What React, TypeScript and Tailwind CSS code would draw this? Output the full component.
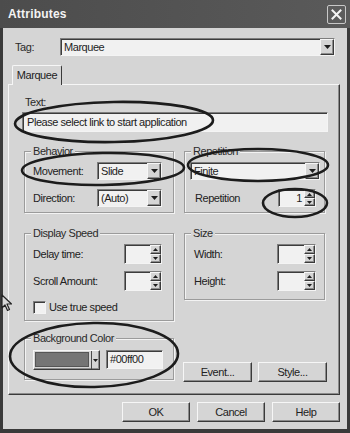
import React from "react";

const sunken =
  "border border-t-[#7d7d7d] border-l-[#7d7d7d] border-b-[#f4f4f4] border-r-[#f4f4f4] shadow-[inset_1px_1px_0_#3c3c3c] bg-[#f1f1f1]";
const raised =
  "border border-t-[#f6f6f6] border-l-[#f6f6f6] border-b-[#3a3a3a] border-r-[#3a3a3a] shadow-[inset_-1px_-1px_0_#8c8c8c] bg-[#d5d5d5]";

function Down({ w = 7, h = 4 }: { w?: number; h?: number }) {
  return (
    <svg width={w} height={h} viewBox="0 0 7 4">
      <path d="M0 0h7L3.5 4z" fill="#1e1e1e" />
    </svg>
  );
}

function Up() {
  return (
    <svg width="5" height="3" viewBox="0 0 5 3">
      <path d="M0 3h5L2.5 0z" fill="#1e1e1e" />
    </svg>
  );
}

function Combo({ value, className = "" }: { value: string; className?: string }) {
  return (
    <div className={`flex h-[18px] ${sunken} ${className}`}>
      <span className="flex-1 pl-[3px] leading-[16px] text-[#1e1e1e]">{value}</span>
      <div className={`w-[14px] h-full flex items-center justify-center ${raised}`}>
        <Down />
      </div>
    </div>
  );
}

function Spin({ value = "", className = "" }: { value?: string; className?: string }) {
  return (
    <div className={`flex ${sunken} ${className}`}>
      <span className="flex-1 text-right pr-[2px] leading-[16px] text-[#1e1e1e]">{value}</span>
      <div className="w-[11px] flex flex-col">
        <div className={`flex-1 flex items-center justify-center ${raised}`}>
          <Up />
        </div>
        <div className={`flex-1 flex items-center justify-center ${raised}`}>
          <Down w={5} h={3} />
        </div>
      </div>
    </div>
  );
}

function Group({
  label,
  className = "",
  children,
}: {
  label: string;
  className?: string;
  children?: React.ReactNode;
}) {
  return (
    <div
      className={`relative border border-[#9b9b9b] shadow-[1px_1px_0_#f3f3f3,inset_1px_1px_0_#f3f3f3] ${className}`}
    >
      <span className="absolute left-[6px] -top-[8px] px-[2px] bg-[#d5d5d5] leading-[14px] text-[#2a2a2a]">
        {label}
      </span>
      {children}
    </div>
  );
}

function Btn({ label, className = "" }: { label: string; className?: string }) {
  return (
    <div
      className={`h-[20px] flex items-center justify-center text-[#222] ${raised} ${className}`}
    >
      {label}
    </div>
  );
}

export default function App() {
  return (
    <div className="relative w-[350px] h-[433px] overflow-hidden bg-[#d5d5d5] font-['Liberation_Sans',sans-serif] text-[11px] tracking-[-0.45px] text-[#222]">
      {/* title bar */}
      <div className="h-[28px] flex items-center justify-between pl-[8px] pr-[4px] bg-gradient-to-r from-[#4c4c4c] to-[#5a5a5a]">
        <span className="font-bold text-[12px] text-[#f4f4f4] tracking-[0.2px]">Attributes</span>
        <div className="w-[19px] h-[19px] rounded-[2px] border border-[#c8c8c8] bg-[#5c5c5c] flex items-center justify-center">
          <svg width="11" height="11" viewBox="0 0 11 11">
            <path d="M1.5 1.5l8 8M9.5 1.5l-8 8" stroke="#f4f4f4" strokeWidth="2" strokeLinecap="square" />
          </svg>
        </div>
      </div>

      {/* body */}
      <div className="h-[405px] flex flex-col border-l-[3px] border-r-[3px] border-b-[4px] border-[#3a3a3a]">
        <div className="flex items-center mt-[10px] ml-[12px]">
          <span className="w-[45px] text-[#2a2a2a]">Tag:</span>
          <Combo value="Marquee" className="w-[275px]" />
        </div>

        {/* tab */}
        <div className="relative z-10 mt-[9px] ml-[9px] -mb-[1px] w-[50px] h-[20px] flex items-center justify-center bg-[#d5d5d5] border-t border-l border-r border-t-[#f6f6f6] border-l-[#f6f6f6] border-r-[#3a3a3a] rounded-t-[2px]">
          Marquee
        </div>

        {/* panel */}
        <div className="ml-[5px] w-[332px] h-[311px] flex flex-col pl-[13px] border border-t-[#f6f6f6] border-l-[#f6f6f6] border-b-[#3a3a3a] border-r-[#3a3a3a] shadow-[inset_-1px_-1px_0_#8c8c8c]">
          <span className="mt-[10px] ml-[3px] leading-[14px] text-[#2a2a2a]">Text:</span>
          <div className={`mt-[3px] w-[306px] h-[20px] flex items-center pl-[4px] ${sunken}`}>
            Please select link to start application
          </div>

          <div className="mt-[19px] ml-[2px] flex gap-[10px]">
            <Group label="Behavior" className="w-[150px] h-[62px]">
              <div className="flex flex-col gap-[9px] pt-[10px] pl-[8px]">
                <div className="flex items-center">
                  <span className="w-[64px]">Movement:</span>
                  <Combo value="Slide" className="w-[65px]" />
                </div>
                <div className="flex items-center">
                  <span className="w-[64px]">Direction:</span>
                  <Combo value="(Auto)" className="w-[65px]" />
                </div>
              </div>
            </Group>
            <Group label="Repetition" className="w-[141px] h-[62px]">
              <div className="flex flex-col gap-[9px] pt-[10px] pl-[5px]">
                <Combo value="Finite" className="w-[130px]" />
                <div className="flex items-center">
                  <span className="w-[88px] pl-[5px]">Repetition</span>
                  <Spin value="1" className="w-[38px] h-[18px]" />
                </div>
              </div>
            </Group>
          </div>

          <div className="mt-[20px] ml-[2px] flex items-start gap-[10px]">
            <Group label="Display Speed" className="w-[150px] h-[88px]">
              <div className="flex flex-col gap-[7px] pt-[10px] pl-[8px]">
                <div className="flex items-center">
                  <span className="w-[91px]">Delay time:</span>
                  <Spin className="w-[38px] h-[20px]" />
                </div>
                <div className="flex items-center">
                  <span className="w-[91px]">Scroll Amount:</span>
                  <Spin className="w-[38px] h-[20px]" />
                </div>
                <div className="flex items-center mt-[1px]">
                  <div className={`w-[13px] h-[13px] ${sunken}`} />
                  <span className="ml-[3px]">Use true speed</span>
                </div>
              </div>
            </Group>
            <Group label="Size" className="w-[141px] h-[67px]">
              <div className="flex flex-col gap-[7px] pt-[10px] pl-[9px]">
                <div className="flex items-center">
                  <span className="w-[83px]">Width:</span>
                  <Spin className="w-[39px] h-[20px]" />
                </div>
                <div className="flex items-center">
                  <span className="w-[83px]">Height:</span>
                  <Spin className="w-[39px] h-[20px]" />
                </div>
              </div>
            </Group>
          </div>

          <div className="mt-[17px] ml-[2px] flex items-start">
            <Group label="Background Color" className="w-[150px] h-[42px]">
              <div className="flex items-start gap-[6px] pt-[11px] pl-[8px]">
                <div className={`w-[67px] h-[20px] flex ${raised}`}>
                  <div className="ml-[1px] mt-[1px] w-[54px] h-[15px] bg-[#757575] border border-[#555]" />
                  <div className="ml-[2px] w-[1px] h-full bg-[#4a4a4a]" />
                  <div className="flex-1 flex items-center justify-center">
                    <Down w={5} h={3} />
                  </div>
                </div>
                <div className={`w-[57px] h-[19px] flex items-center pl-[3px] ${sunken}`}>#00ff00</div>
              </div>
            </Group>
            <div className="ml-[9px] mt-[24px] flex gap-[6px]">
              <Btn label="Event..." className="w-[69px]" />
              <Btn label="Style..." className="w-[69px]" />
            </div>
          </div>
        </div>

        <div className="mt-[7px] mr-[7px] flex justify-end gap-[7px]">
          <Btn label="OK" className="w-[68px]" />
          <Btn label="Cancel" className="w-[68px]" />
          <Btn label="Help" className="w-[68px]" />
        </div>
      </div>

      {/* mouse pointer */}
      <svg className="absolute left-[1px] top-[294px]" width="11" height="18" viewBox="0 0 11 18">
        <path d="M1 1v13l3-3 2.5 5.5 2-1L6 10h4.5z" fill="#d8d8d8" stroke="#222" strokeWidth="1.2" strokeLinejoin="round" />
      </svg>

      {/* hand-drawn highlight ovals */}
      <svg className="absolute left-0 top-0 pointer-events-none" width="350" height="433" viewBox="0 0 350 433">
        <g fill="none" stroke="#1c1c1c" strokeWidth="2.6">
          <ellipse cx="114" cy="122" rx="99" ry="20" transform="rotate(-1 114 122)" />
          <ellipse cx="103" cy="169" rx="81" ry="16" transform="rotate(-1 103 169)" />
          <ellipse cx="258" cy="165" rx="70" ry="16" />
          <ellipse cx="295" cy="203" rx="32" ry="14" />
          <ellipse cx="94" cy="355" rx="84" ry="32" transform="rotate(-1 94 355)" />
        </g>
      </svg>
    </div>
  );
}
